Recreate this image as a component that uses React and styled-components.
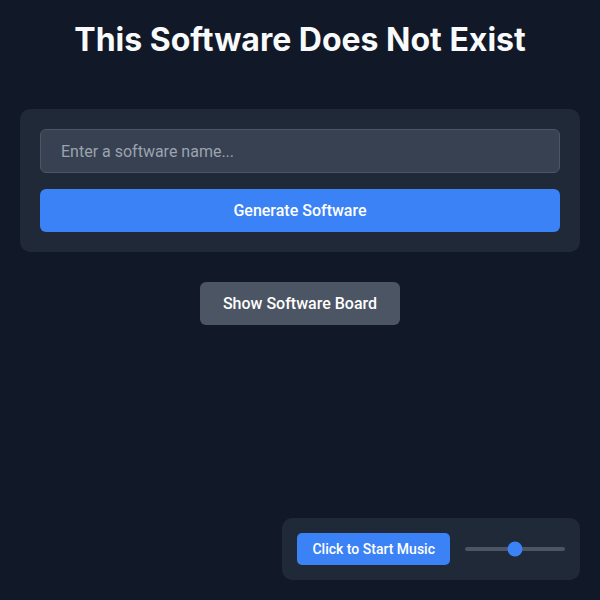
import React, { useState } from "react";
import styled, { createGlobalStyle } from "styled-components";

const GlobalStyle = createGlobalStyle`
  html, body {
    margin: 0;
    padding: 0;
    background-color: #111827;
  }
  * {
    box-sizing: border-box;
  }
`;

export default function App() {
  const [name, setName] = useState("");
  const [volume, setVolume] = useState(50);

  return (
    <Page>
      <GlobalStyle />
      <Title>This Software Does Not Exist</Title>

      <GeneratorCard>
        <NameInput
          placeholder="Enter a software name..."
          value={name}
          onChange={(e) => setName(e.target.value)}
        />
        <PrimaryButton>Generate Software</PrimaryButton>
      </GeneratorCard>

      <BoardButton>Show Software Board</BoardButton>

      <MusicPanel>
        <MusicButton>Click to Start Music</MusicButton>
        <VolumeTrack>
          <VolumeThumb style={{ left: `${volume}%` }} />
          <VolumeInput
            type="range"
            min="0"
            max="100"
            value={volume}
            onChange={(e) => setVolume(Number(e.target.value))}
          />
        </VolumeTrack>
      </MusicPanel>
    </Page>
  );
}

const Page = styled.div`
  min-height: 600px;
  background-color: #111827;
  display: flex;
  flex-direction: column;
  align-items: center;
  padding: 20px 20px;
  font-family: Roboto, "Liberation Sans", sans-serif;
  color: #ffffff;
`;

const Title = styled.h1`
  margin: 0 0 49px;
  font-family: Inter, "Liberation Sans", sans-serif;
  font-size: 32px;
  font-weight: 700;
  line-height: 40px;
  color: #f9fafb;
`;

const GeneratorCard = styled.div`
  width: 100%;
  background-color: #1f2937;
  border-radius: 10px;
  padding: 20px;
  display: flex;
  flex-direction: column;
  gap: 16px;
`;

const NameInput = styled.input`
  width: 100%;
  height: 44px;
  background-color: #374151;
  border: 1px solid #4b5563;
  border-radius: 6px;
  padding: 0 20px;
  font-family: Roboto, "Liberation Sans", sans-serif;
  font-size: 16px;
  color: #ffffff;
  outline: none;
  &::placeholder {
    color: #9ca3af;
  }
`;

const PrimaryButton = styled.button`
  width: 100%;
  height: 43px;
  border: none;
  border-radius: 6px;
  background-color: #3b82f6;
  color: #ffffff;
  font-family: Roboto, "Liberation Sans", sans-serif;
  font-size: 16px;
  font-weight: 500;
  cursor: pointer;
`;

const BoardButton = styled.button`
  margin-top: 30px;
  width: 200px;
  height: 43px;
  border: none;
  border-radius: 6px;
  background-color: #4b5563;
  color: #ffffff;
  font-family: Roboto, "Liberation Sans", sans-serif;
  font-size: 16px;
  font-weight: 500;
  cursor: pointer;
`;

const MusicPanel = styled.div`
  position: fixed;
  right: 20px;
  bottom: 20px;
  background-color: #1f2937;
  border-radius: 10px;
  padding: 15px;
  display: flex;
  align-items: center;
  gap: 15px;
`;

const MusicButton = styled.button`
  height: 32px;
  padding: 0 15px;
  border: none;
  border-radius: 5px;
  background-color: #3b82f6;
  color: #ffffff;
  font-family: Roboto, "Liberation Sans", sans-serif;
  font-size: 14px;
  font-weight: 500;
  cursor: pointer;
`;

const VolumeTrack = styled.div`
  position: relative;
  width: 100px;
  height: 4px;
  border-radius: 2px;
  background-color: #4b5563;
`;

const VolumeThumb = styled.div`
  position: absolute;
  top: 50%;
  width: 15px;
  height: 15px;
  border-radius: 50%;
  background-color: #3b82f6;
  transform: translate(-50%, -50%);
`;

const VolumeInput = styled.input`
  position: absolute;
  inset: -8px 0;
  width: 100%;
  margin: 0;
  opacity: 0;
  cursor: pointer;
`;
